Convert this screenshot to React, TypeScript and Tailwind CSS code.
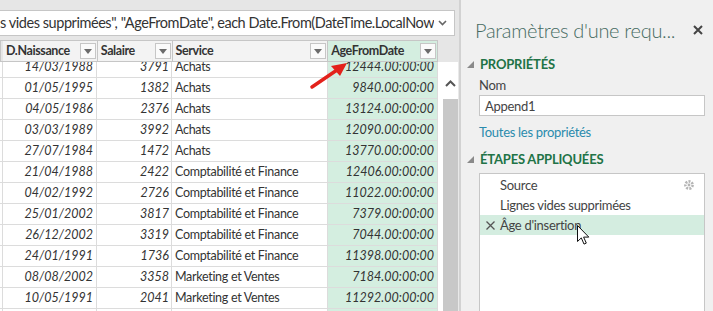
const ROWS = [
  ['14/03/1988', '3791', 'Achats', '12444.00:00:00'],
  ['01/05/1995', '1382', 'Achats', '9840.00:00:00'],
  ['04/05/1986', '2376', 'Achats', '13124.00:00:00'],
  ['03/03/1989', '3992', 'Achats', '12090.00:00:00'],
  ['27/07/1984', '1472', 'Achats', '13770.00:00:00'],
  ['21/04/1988', '2422', 'Comptabilité et Finance', '12406.00:00:00'],
  ['04/02/1992', '2726', 'Comptabilité et Finance', '11022.00:00:00'],
  ['25/01/2002', '3817', 'Comptabilité et Finance', '7379.00:00:00'],
  ['26/12/2002', '3319', 'Comptabilité et Finance', '7044.00:00:00'],
  ['24/01/1991', '1736', 'Comptabilité et Finance', '11398.00:00:00'],
  ['08/08/2002', '3358', 'Marketing et Ventes', '7184.00:00:00'],
  ['10/05/1991', '2041', 'Marketing et Ventes', '11292.00:00:00'],
  ['', '', '', ''],
]

function FilterButton() {
  return (
    <span className="flex h-[16px] w-[16px] shrink-0 items-center justify-center border border-[#c6c6c6] bg-[#fafafa]">
      <svg width="8" height="5" viewBox="0 0 8 5">
        <path d="M0 0h8L4 5z" fill="#6b6b6b" />
      </svg>
    </span>
  )
}

function HeaderCell({ label, width, active }: { label: string; width: string; active?: boolean }) {
  return (
    <div
      className={`flex ${width} items-center justify-between border-r border-[#c6c6c6] pl-[3px] pr-[1px] ${active ? 'bg-[#d4eee0]' : 'bg-[#f3f3f3]'}`}
    >
      <span className="whitespace-nowrap text-[12.5px] font-bold tracking-[-0.4px] text-[#333]">{label}</span>
      <FilterButton />
    </div>
  )
}

function Caret() {
  return (
    <svg width="7" height="7" viewBox="0 0 7 7">
      <path d="M7 0V7H0z" fill="#8a8a8a" />
    </svg>
  )
}

export default function App() {
  return (
    <div
      className="relative flex h-[311px] w-[713px] overflow-hidden bg-[#e6e6e6] text-[12.5px]"
      style={{ fontFamily: 'Lato, "Noto Sans", sans-serif' }}
    >
      {/* Zone requête */}
      <div className="flex h-[311px] w-[459px] shrink-0 flex-col">
        <div className="mt-[10px] flex h-[26px] w-[455px] shrink-0 items-center justify-between overflow-hidden border border-l-0 border-[#c6c6c6] bg-white pr-[7px]">
          <span className="overflow-hidden whitespace-nowrap text-[14.5px] tracking-[-0.45px] text-[#333]">
            s vides supprimées", "AgeFromDate", each Date.From(DateTime.LocalNow
          </span>
          <svg width="9" height="6" viewBox="0 0 9 6" className="shrink-0">
            <path d="M1 1l3.5 3.5L8 1" stroke="#666" strokeWidth="1.6" fill="none" />
          </svg>
        </div>

        <div className="mt-[4px] flex min-h-0 flex-1">
          <div className="flex w-[438px] flex-col">
            <div className="flex h-[22px] shrink-0 border-y border-l border-[#c6c6c6] pl-[2px]">
              <HeaderCell label="D.Naissance" width="w-[95px]" />
              <HeaderCell label="Salaire" width="w-[75px]" />
              <HeaderCell label="Service" width="w-[156px]" />
              <HeaderCell label="AgeFromDate" width="w-[110px]" active />
            </div>
            <div className="min-h-0 flex-1 overflow-hidden bg-white">
              <div className="-mt-[5px]">
                {ROWS.map((r, i) => (
                  <div key={i} className="flex h-[21px] border-b border-[#dcdcdc] pl-[2px] text-[#333]">
                    <div className="flex w-[95px] items-center justify-end border-x border-[#dcdcdc] pr-[3px] italic">
                      {r[0]}
                    </div>
                    <div className="flex w-[75px] items-center justify-end border-r border-[#dcdcdc] pr-[2px] italic">
                      {r[1]}
                    </div>
                    <div className="flex w-[156px] items-center border-r border-[#dcdcdc] pl-[3px] tracking-[-0.3px]">
                      {r[2]}
                    </div>
                    <div className="flex w-[110px] items-center justify-end border-r border-[#dcdcdc] bg-[#d4eee0] pr-[3px] italic">
                      {r[3]}
                    </div>
                  </div>
                ))}
              </div>
            </div>
          </div>

          <div className="flex w-[21px] flex-col">
            <div className="h-[22px] shrink-0" />
            <div className="flex flex-1 bg-white">
              <div className="w-[5px]" />
              <div className="flex w-[15px] flex-col">
                <div className="flex h-[37px] items-end justify-center pb-[12px]">
                  <svg width="11" height="7" viewBox="0 0 11 7">
                    <path d="M1 6l4.5-4.5L10 6" stroke="#555" strokeWidth="2" fill="none" />
                  </svg>
                </div>
                <div className="flex-1 bg-[#c8c8c8]" />
              </div>
              <div className="w-[1px] bg-[#e9e9e9]" />
            </div>
          </div>
        </div>
      </div>

      <div className="w-[2px] shrink-0 bg-[#d2d2d2]" />

      {/* Paramètres d'une requête */}
      <div className="flex w-[252px] shrink-0 flex-col bg-[#f0f0f0] pl-[6px] pr-[8px] text-[13px] leading-[20px] tracking-[-0.3px] text-[#444]">
        <div className="mt-[15px] flex items-center justify-between pl-[8px]">
          <span className="whitespace-nowrap text-[20px] font-light leading-[30px] text-[#466b62]">
            Paramètres d'une requ...
          </span>
          <svg width="10" height="10" viewBox="0 0 10 10" className="mr-[2px] shrink-0">
            <path d="M1 1l8 8M9 1l-8 8" stroke="#444" strokeWidth="2" />
          </svg>
        </div>

        <div className="mt-[9px] flex items-center gap-[6px]">
          <Caret />
          <span className="font-bold tracking-[-0.2px] text-[#217346]">PROPRIÉTÉS</span>
        </div>
        <div className="mt-[1px] pl-[12px]">Nom</div>
        <div className="ml-[12px] flex h-[21px] items-center border border-[#c6c6c6] bg-white pl-[5px]">
          Append1
        </div>
        <div className="mt-[6px] pl-[12px] text-[#2a8bad]">Toutes les propriétés</div>

        <div className="mt-[7px] flex items-center gap-[6px]">
          <Caret />
          <span className="font-bold tracking-[-0.2px] text-[#217346]">ÉTAPES APPLIQUÉES</span>
        </div>
        <div className="relative ml-[12px] mt-[4px] flex-1 border border-b-0 border-[#c6c6c6] bg-white pt-[1px]">
          <div className="flex h-[20px] items-center justify-between pl-[20px] pr-[9px]">
            <span>Source</span>
            <svg width="12" height="12" viewBox="0 0 12 12">
              <circle cx="6" cy="6" r="3.6" fill="none" stroke="#b5b5b5" strokeWidth="2.6" strokeDasharray="2 1.2" />
              <circle cx="6" cy="6" r="1.4" fill="#b5b5b5" />
            </svg>
          </div>
          <div className="flex h-[20px] items-center pl-[20px]">Lignes vides supprimées</div>
          <div className="flex h-[20px] items-center bg-[#d4ede0] pl-[6px]">
            <svg width="9" height="9" viewBox="0 0 9 9" className="mr-[5px]">
              <path d="M0.5 0.5l8 8M8.5 0.5l-8 8" stroke="#555" strokeWidth="1.3" />
            </svg>
            <span>Âge d'insertion</span>
          </div>
          <svg width="13" height="20" viewBox="0 0 13 20" className="absolute left-[97px] top-[51px]">
            <path d="M0.5 0.5v16l3.8-3.6 2.7 6.2 2.3-1-2.7-6h5.2z" fill="white" stroke="#111" strokeWidth="1" />
          </svg>
        </div>
      </div>

      {/* Flèche rouge */}
      <svg width="40" height="30" viewBox="0 0 40 30" className="absolute left-[309px] top-[60px]">
        <path d="M3 27L28 10" stroke="#e3211b" strokeWidth="3.5" strokeLinecap="round" />
        <path d="M38 3L22 6l9 10z" fill="#e3211b" />
      </svg>
    </div>
  )
}
